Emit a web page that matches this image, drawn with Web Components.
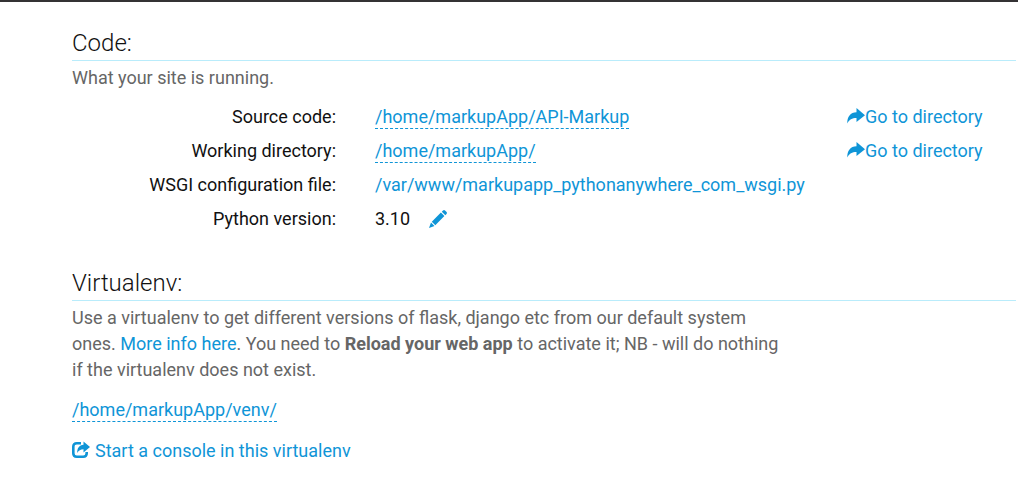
<!DOCTYPE html>
<html lang="en">
<head>
<meta charset="utf-8">
<title>Web app configuration</title>
<style>
body { margin: 0; background: #fff; color: #111; font: 18px/26px Roboto, sans-serif; --link: #0f95d7; }
</style>
</head>
<body>
<web-app-page>
  <config-section heading="Code:">
    <section-note>What your site is running.</section-note>
    <setting-list>
      <setting-row label="Source code:">
        <path-link editable>/home/markupApp/API-Markup</path-link>
        <icon-link slot="action" icon="share">Go to directory</icon-link>
      </setting-row>
      <setting-row label="Working directory:">
        <path-link editable>/home/markupApp/</path-link>
        <icon-link slot="action" icon="share">Go to directory</icon-link>
      </setting-row>
      <setting-row label="WSGI configuration file:">
        <path-link>/var/www/markupapp_pythonanywhere_com_wsgi.py</path-link>
      </setting-row>
      <setting-row label="Python version:">3.10 <edit-button></edit-button></setting-row>
    </setting-list>
  </config-section>
  <config-section heading="Virtualenv:">
    <section-note>Use a virtualenv to get different versions of flask, django etc from our default system ones. <path-link>More info here</path-link>. You need to <b>Reload your web app</b> to activate it; NB - will do nothing if the virtualenv does not exist.</section-note>
    <venv-links>
      <path-link editable>/home/markupApp/venv/</path-link>
      <icon-link icon="console" spaced>Start a console in this virtualenv</icon-link>
    </venv-links>
  </config-section>
</web-app-page>
<script>
const icons = {
  share: '<svg width="18" height="16" viewBox="0 0 18 16" aria-hidden="true"><path fill="currentColor" d="M9.500 0 18 7.200 9.500 14V10C5 10 2.300 11.500.300 15.500 0 9 3.500 4.200 9.500 4.200Z"/></svg>',
  console: '<svg width="18" height="18" viewBox="0 0 18 18" aria-hidden="true"><path fill="none" stroke="currentColor" stroke-width="2.600" d="M9 2.300H4.800Q1.300 2.300 1.300 5.800V12.200Q1.300 15.700 4.800 15.700H11.200Q14.700 15.700 14.700 12.200V11"/><path fill="currentColor" d="M11.500.500 18 6 11.500 11.500V8.300C8.500 8.300 6.700 9.500 5.300 12 5 7.300 7.300 4 11.500 3.800Z"/></svg>',
  pencil: '<svg width="20" height="20" viewBox="0 0 20 20" aria-hidden="true"><path fill="currentColor" d="M15 1.500Q16 .500 17 1.400L18.600 3Q19.500 4 18.500 5L17.300 6.200 13.800 2.700ZM12.900 3.600 16.400 7.100 7.300 16.200 3.800 12.700ZM3 13.500 6.500 17 1 19Z"/></svg>'
};

function define(name, template, setup) {
  customElements.define(name, class extends HTMLElement {
    constructor() {
      super();
      this.attachShadow({ mode: 'open' }).innerHTML = template;
    }
    connectedCallback() {
      if (setup) setup(this, this.shadowRoot);
    }
  });
}

define('web-app-page', `
  <style>
    :host { display: block; border-top: 2px solid #343234; }
    main { display: flex; flex-direction: column; gap: 35px; padding: 25px 2px 24px 72px; }
  </style>
  <main><slot></slot></main>`);

define('config-section', `
  <style>
    :host { display: block; }
    h2 { margin: 0 0 4px; padding-bottom: 1px; border-bottom: 1px solid #b9ecfb; font-size: 24px; line-height: 32px; font-weight: 300; }
  </style>
  <section><h2></h2><slot></slot></section>`,
  (host, root) => { root.querySelector('h2').textContent = host.getAttribute('heading'); });

define('section-note', `
  <style>
    :host { display: block; max-width: 712px; color: #666; }
    p { margin: 0; }
  </style>
  <p><slot></slot></p>`);

define('setting-list', `
  <style>:host { display: flex; flex-direction: column; gap: 8px; margin-top: 13px; }</style>
  <slot></slot>`);

define('setting-row', `
  <style>
    :host { display: block; }
    dl { display: grid; grid-template-columns: 264fr 433fr 169fr; column-gap: 39px; margin: 0; }
    dt { text-align: right; }
    dd { margin: 0; white-space: nowrap; }
  </style>
  <dl><dt></dt><dd><slot></slot></dd><dd><slot name="action"></slot></dd></dl>`,
  (host, root) => { root.querySelector('dt').textContent = host.getAttribute('label'); });

define('path-link', `
  <style>
    a { color: var(--link); text-decoration: none; }
    :host([editable]) a { padding-bottom: 1px; border-bottom: 1px dashed var(--link); }
  </style>
  <a href="#"><slot></slot></a>`);

define('icon-link', `
  <style>
    :host { display: block; }
    a { display: flex; align-items: center; color: var(--link); text-decoration: none; }
    :host([spaced]) a { gap: 5px; }
    .icon { display: flex; flex: none; padding-bottom: 2px; }
  </style>
  <a href="#"><span class="icon"></span><span><slot></slot></span></a>`,
  (host, root) => { root.querySelector('.icon').innerHTML = icons[host.getAttribute('icon')]; });

define('edit-button', `
  <style>
    :host { display: inline-block; margin-left: 13px; vertical-align: top; }
    button { display: flex; align-items: center; height: 26px; margin: 0; padding: 0; border: 0; background: none; color: var(--link); cursor: pointer; }
  </style>
  <button type="button" aria-label="Edit Python version">${icons.pencil}</button>`);

define('venv-links', `
  <style>:host { display: flex; flex-direction: column; align-items: flex-start; gap: 15px; margin-top: 14px; }</style>
  <slot></slot>`);
</script>
</body>
</html>
